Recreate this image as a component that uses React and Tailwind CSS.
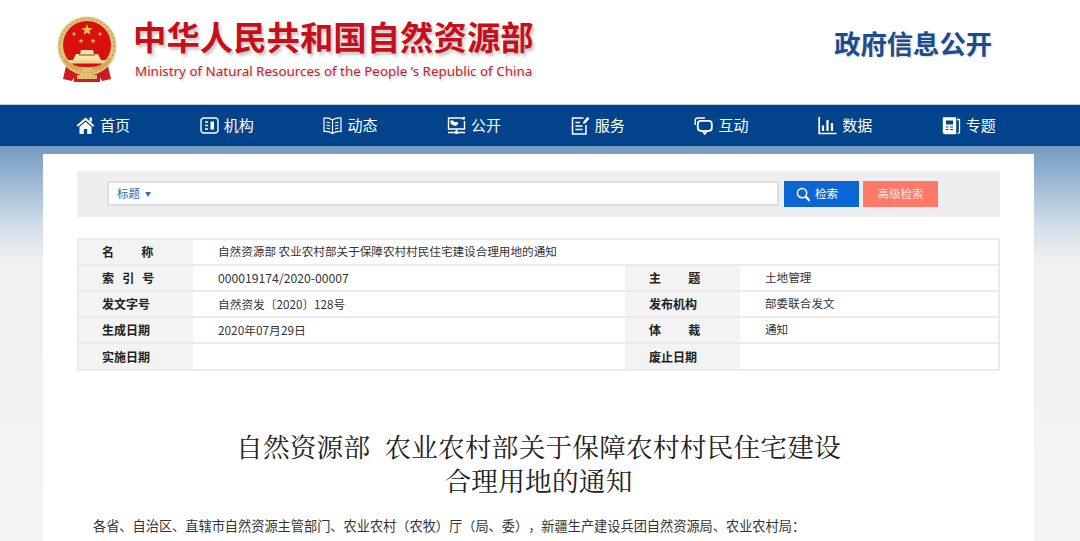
import React from "react";

const cjk = "font-['Noto_Sans_CJK_SC','Microsoft_YaHei',sans-serif]";

function Emblem() {
  const star = (cx, cy, r, rot = 0) => {
    const pts = [];
    for (let i = 0; i < 10; i++) {
      const a = ((i * 36 - 90 + rot) * Math.PI) / 180;
      const rad = i % 2 === 0 ? r : r * 0.4;
      pts.push(`${cx + rad * Math.cos(a)},${cy + rad * Math.sin(a)}`);
    }
    return <polygon points={pts.join(" ")} fill="#e8c24a" />;
  };
  return (
    <svg width="62" height="68" viewBox="0 0 62 68" className="shrink-0">
      <path d="M11 46 L7 63 L16 65 L20 58 Z" fill="#cf1a20" />
      <path d="M51 46 L55 63 L46 65 L42 58 Z" fill="#cf1a20" />
      <rect x="18" y="56" width="26" height="10" fill="#cf1a20" />
      <rect x="21" y="59" width="20" height="4" fill="#e3c06a" />
      <circle cx="31" cy="30" r="29.5" fill="#dfc383" />
      <circle cx="31" cy="30" r="27" fill="none" stroke="#c49a4a" strokeWidth="1.2" strokeDasharray="2 2" />
      <circle cx="31" cy="29" r="24" fill="#d9100f" />
      {star(31, 14, 6)}
      {star(18, 18, 2.5, 20)}
      {star(44, 18, 2.5, -20)}
      {star(25, 25, 2.8, 10)}
      {star(37, 25, 2.8, -10)}
      <path d="M17 44 L20 38 H24 L25 34 H37 L38 38 H42 L45 44 Z" fill="#f2e3b8" />
      <rect x="23" y="38" width="16" height="2" fill="#c9982f" />
      <rect x="11" y="44" width="40" height="3.5" fill="#ecd493" />
      <path d="M7 44 Q14 56 31 55 Q48 56 55 44 L53 42 Q46 52 31 51 Q16 52 9 42 Z" fill="#d4a94f" />
      <rect x="26" y="51" width="10" height="5" rx="1" fill="#e3c06a" />
    </svg>
  );
}

const S = ({ children }) => (
  <svg width="19" height="19" viewBox="0 0 19 19" fill="none" stroke="white" strokeWidth="1.4" className="shrink-0">
    {children}
  </svg>
);

const icons = {
  home: (
    <S>
      <path d="M0.5 9.5 L9.5 1.5 L18.5 9.5 L17 10.8 L9.5 4.2 L2 10.8 Z" fill="white" stroke="none" />
      <path d="M3.5 11 L9.5 5.7 L15.5 11 V18 H11.2 V13 H7.8 V18 H3.5 Z" fill="white" stroke="none" />
      <rect x="13.5" y="1.5" width="2.5" height="4" fill="white" stroke="none" />
    </S>
  ),
  org: (
    <S>
      <rect x="1" y="2" width="17" height="15" rx="3" />
      <path d="M5 6 H8 M5 9.5 H8 M5 13 H8" strokeWidth="1.6" />
      <rect x="10.5" y="5.5" width="3.5" height="8" fill="white" stroke="none" />
    </S>
  ),
  book: (
    <S>
      <path d="M9.5 4 Q6 1.5 1 2 V15.5 Q6 15 9.5 17.5 Q13 15 18 15.5 V2 Q13 1.5 9.5 4 Z M9.5 4 V17.5" strokeWidth="1.2" />
      <path d="M3.5 6 L7 7 M3.5 9 L7 10 M3.5 12 L7 13 M15.5 6 L12 7 M15.5 9 L12 10 M15.5 12 L12 13" strokeWidth="1.1" />
    </S>
  ),
  screen: (
    <S>
      <path d="M14 2 H1.5 V13 H17.5 V5" />
      <path d="M3.5 4.5 H6 L7.5 6 H11 V8 L9 10 L5 9 L3.5 7 Z" fill="white" stroke="none" />
      <rect x="14.5" y="1" width="3.5" height="2.5" fill="white" stroke="none" />
      <path d="M9.5 13 V16 M1 16.5 H18" />
      <rect x="8" y="15" width="3" height="3" fill="white" stroke="none" />
    </S>
  ),
  doc: (
    <S>
      <path d="M12.5 2 H1.5 V18 H15 V9" strokeWidth="1.5" />
      <path d="M4.5 6.5 H9 M4.5 10 H11.5 M4.5 13.5 H11.5" strokeWidth="1.6" />
      <path d="M12.5 5.5 L16.5 0.8 L18.5 2.5 L14.5 7.2 L12 7.8 Z" fill="white" stroke="none" />
    </S>
  ),
  chat: (
    <S>
      <path d="M1.2 9 V4.5 Q1.2 2 4 2 H11" strokeWidth="1.4" />
      <rect x="3.8" y="4.8" width="14" height="10" rx="3" strokeWidth="1.8" />
      <path d="M8.5 15 L10.8 18 L13 15" strokeWidth="1.6" />
    </S>
  ),
  chart: (
    <S>
      <path d="M1.2 1 V17.5 H18.5" strokeWidth="1.7" />
      <path d="M5 9.5 V15 M9.5 4 V15 M14 7 V15" strokeWidth="2.2" />
    </S>
  ),
  news: (
    <S>
      <path d="M1.5 2 H13.5 V17.5 H3 Q1.5 17.5 1.5 16 Z" fill="white" stroke="white" />
      <rect x="4" y="4.5" width="7" height="4" fill="#02438c" stroke="none" />
      <path d="M4 11 H6.5 M8 11 H11 M4 13.5 H6.5 M8 13.5 H11" stroke="#02438c" strokeWidth="1.1" />
      <path d="M15 3.5 H17.5 V16 Q17.5 17.5 15.5 17.5" strokeWidth="1.3" />
    </S>
  ),
};

const nav = [
  ["home", "首页"],
  ["org", "机构"],
  ["book", "动态"],
  ["screen", "公开"],
  ["doc", "服务"],
  ["chat", "互动"],
  ["chart", "数据"],
  ["news", "专题"],
];

const Label = ({ children }) => (
  <div className="w-[114px] shrink-0 bg-[#f3f3f3] pl-[23px] font-bold text-[12px] text-[#222] whitespace-pre">{children}</div>
);
const Label2 = ({ children }) => (
  <div className="w-[115px] shrink-0 bg-[#f3f3f3] pl-[24px] font-bold text-[12px] text-[#222] whitespace-pre">{children}</div>
);
const Value = ({ children, className = "text-[11.6px]" }) => (
  <div className={`pl-[25px] text-[#333] whitespace-pre ${className}`}>{children}</div>
);
const Row = ({ children }) => (
  <div className="flex items-stretch h-[26px] border-b-2 border-[#ebebeb] last:border-b-0 last:h-[25px] [&>div]:flex [&>div]:items-center">{children}</div>
);

export default function App() {
  return (
    <div className={`w-[1080px] h-[541px] overflow-hidden bg-white ${cjk}`}>
      <header className="flex items-start justify-between h-[105px] pl-[56px] pr-[88px] border-b border-[#b9cde4]">
        <div className="flex gap-[17px] pt-[16px]">
          <Emblem />
          <div className="-mt-[2px] -ml-[2px]">
            <div className="text-[33.4px] leading-[44px] font-bold whitespace-nowrap text-[#c70f1b] [text-shadow:2px_3px_3px_rgba(0,0,0,0.22)]">
              中华人民共和国自然资源部
            </div>
            <div className="font-['Noto_Sans',sans-serif] text-[13.4px] leading-[20px] mt-[3px] ml-[2px] whitespace-nowrap text-[#c4222c] [text-shadow:1px_2px_2px_rgba(0,0,0,0.2)]">
              Ministry of Natural Resources of the People ’s Republic of China
            </div>
          </div>
        </div>
        <div className="pt-[25px] text-[26.3px] leading-[36px] font-bold text-[#1b4d8e] [text-shadow:1px_1px_2px_rgba(0,0,0,0.15)]">政府信息公开</div>
      </header>

      <nav className="flex h-[41px] bg-[#02438c] pl-[76px] items-center">
        {nav.map(([ic, t]) => (
          <div key={t} className="flex w-[123.7px] shrink-0 items-center gap-[5px] text-[15px] text-white">
            {icons[ic]}
            <span>{t}</span>
          </div>
        ))}
      </nav>

      <div className="h-[395px] px-[43px] pt-[8px] bg-[linear-gradient(180deg,#739ac1_0px,#a9c0d8_45px,#d2dde8_80px,#f0f0f0_115px,#f4f4f4_100%)]">
        <main className="w-[991px] h-full bg-white px-[34px] pt-[17px]">
          <div className="flex h-[46px] bg-[#eeeeee] pl-[30px] pt-[10px]">
            <div className="flex items-center w-[672px] h-[25px] bg-white border-2 border-[#dddddd] pl-[8px] text-[11.5px] text-[#2b6cb0]">
              标题<span className="ml-[5px] text-[6px]">▼</span>
            </div>
            <button className="flex items-center gap-[5px] w-[75px] h-[26px] ml-[5px] pl-[12px] bg-[#0b66d4] text-[11.5px] text-white">
              <svg width="14" height="15" viewBox="0 0 15 16" fill="none" stroke="white" strokeWidth="1.6">
                <circle cx="6.5" cy="6.5" r="5" />
                <path d="M10.3 10.3 L15 15" strokeWidth="2.4" />
              </svg>
              检索
            </button>
            <button className="w-[75px] h-[26px] ml-[4px] bg-[#ff7868] text-[11.5px] text-[#ffe9e5]">高级检索</button>
          </div>

          <div className="mt-[21px] border-2 border-[#ebebeb]">
            <Row>
              <Label>{"名          称"}</Label>
              <Value>自然资源部 农业农村部关于保障农村村民住宅建设合理用地的通知</Value>
            </Row>
            <Row>
              <Label>{"索   引   号"}</Label>
              <Value className="w-[432px] text-[12.2px]">000019174/2020-00007</Value>
              <Label2>{"主          题"}</Label2>
              <Value>土地管理</Value>
            </Row>
            <Row>
              <Label>发文字号</Label>
              <Value className="w-[432px] text-[11.7px]">自然资发〔2020〕128号</Value>
              <Label2>发布机构</Label2>
              <Value>部委联合发文</Value>
            </Row>
            <Row>
              <Label>生成日期</Label>
              <Value className="w-[432px] text-[11.8px]">2020年07月29日</Value>
              <Label2>{"体          裁"}</Label2>
              <Value>通知</Value>
            </Row>
            <Row>
              <Label>实施日期</Label>
              <Value className="w-[432px]"></Value>
              <Label2>废止日期</Label2>
              <Value></Value>
            </Row>
          </div>

          <h1 className="mt-[58px] text-center text-[26.67px] leading-[34px] tracking-[0.2px] font-normal text-[#222] font-['Noto_Serif_CJK_SC','Liberation_Serif','Noto_Sans_CJK_SC',serif]">
            自然资源部&nbsp;&nbsp;农业农村部关于保障农村村民住宅建设
            <br />
            合理用地的通知
          </h1>
          <p className="mt-[17px] ml-[16px] text-[13.2px] leading-[24px] whitespace-nowrap text-[#333] [text-spacing-trim:space-all]">
            各省、自治区、直辖市自然资源主管部门、农业农村（农牧）厅（局、委），新疆生产建设兵团自然资源局、农业农村局：
          </p>
        </main>
      </div>
    </div>
  );
}
